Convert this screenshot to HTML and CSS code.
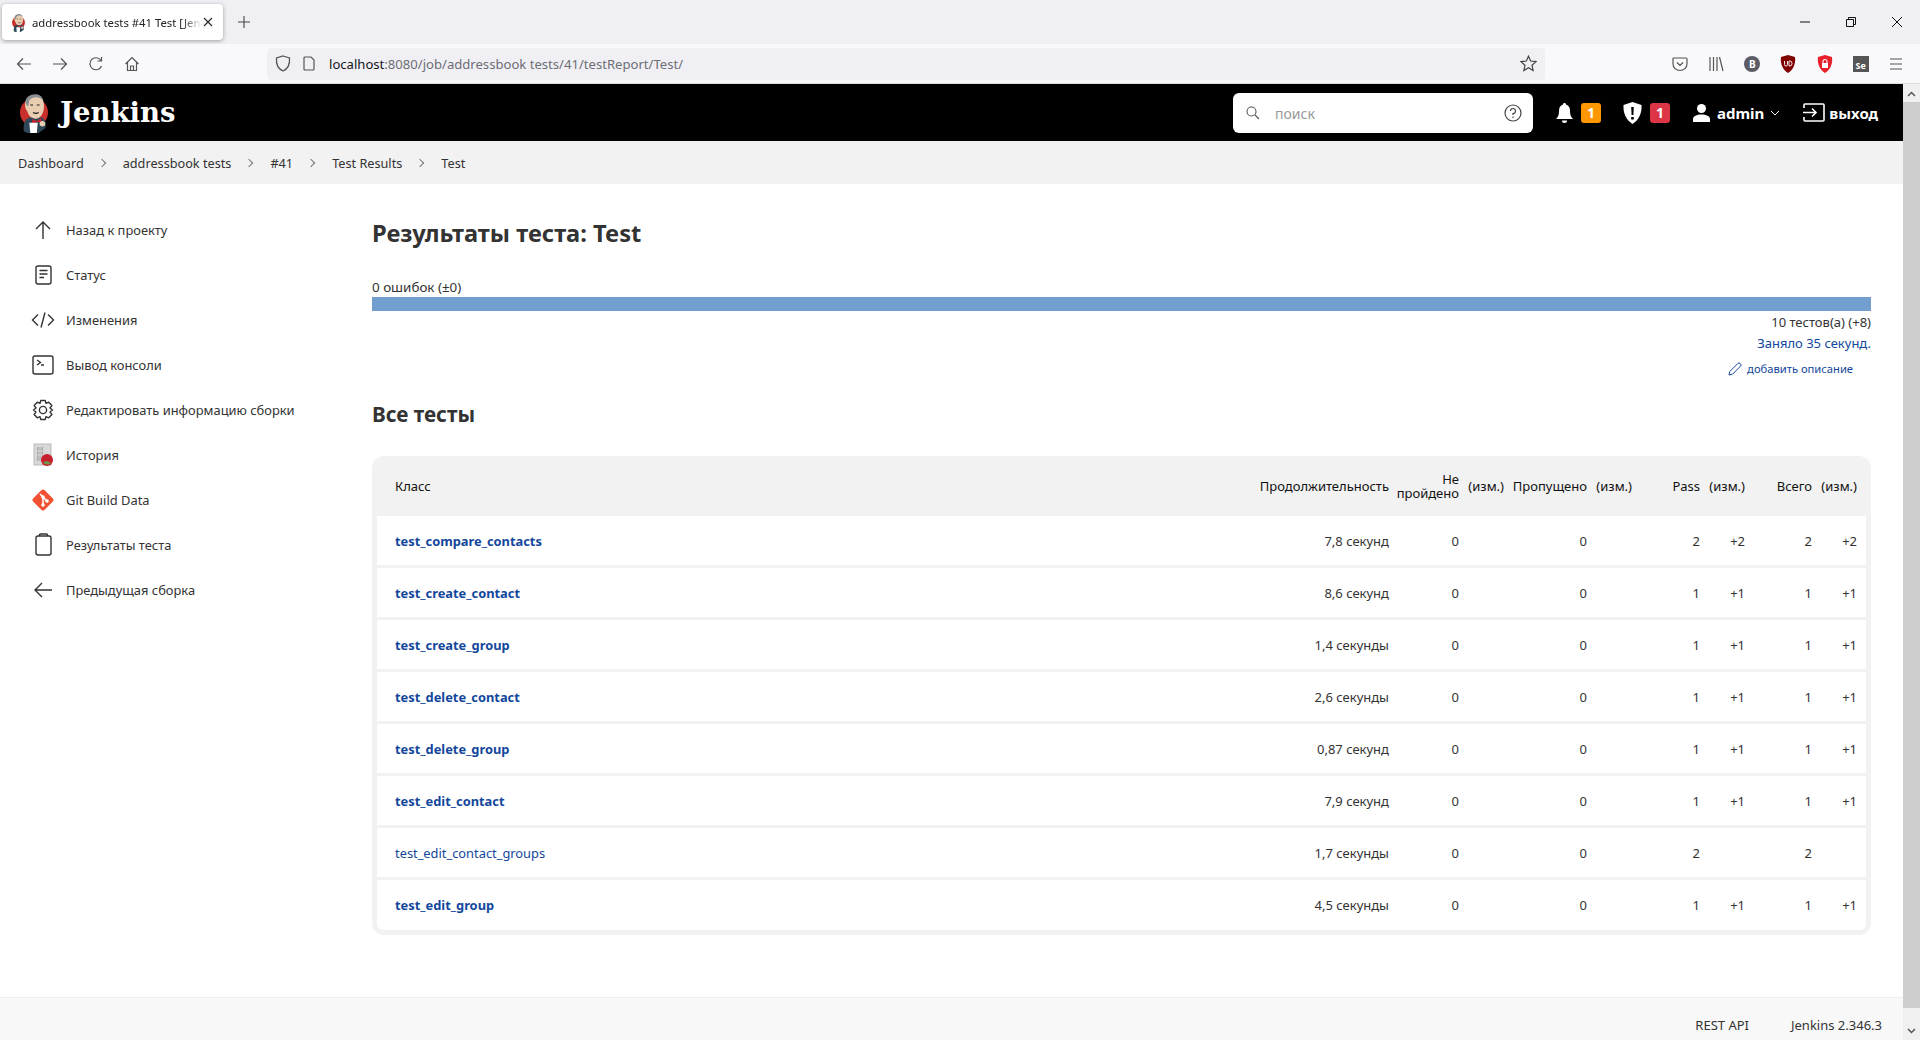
FILE: index.html
```html
<!DOCTYPE html>
<html lang="ru">
<head>
  <meta charset="UTF-8">
  <title>addressbook tests #41 Test [Jenkins]</title>
  <link rel="stylesheet" href="styles.css">
</head>
<body>

<svg class="defs" width="0" height="0">
  <symbol id="butler" viewBox="0 0 34 44">
    <circle cx="17" cy="22" r="15" fill="#c8302c"/>
    <path d="M6 42 C5 33 8 28 13 27 L25 27 C29 29 31 34 29 39 L22 44 H10 Z" fill="#2f4858"/>
    <path d="M8 10 C9 2 25 1 27 10 C29 17 27 25 22 28 C17 30 11 27 10 21 C7 18 7 13 8 10 Z" fill="#e8cdb0"/>
    <path d="M8 11 C8 1 25 -1 27 9 C22 4 15 5 12 9 L11 15 C9 15 8 13 8 11 Z" fill="#8a8f94"/>
    <path d="M13 14 h3 M20 14 h3 M16 22 q3 2 6 0" stroke="#231f20" stroke-width="1.2" fill="none"/>
    <path d="M15 29 L20 31 L25 28 L25 33 L20 32 L15 35 Z" fill="#c8202c"/>
    <path d="M12 33 h9 l-1 11 h-7 Z" fill="#fff"/>
    <circle cx="26" cy="34" r="3" fill="#e8cdb0"/>
  </symbol>
</svg>

<div class="tabstrip">
  <div class="tab">
    <svg class="tab-icon" width="15" height="19"><use href="#butler"/></svg>
    <span class="tab-title">addressbook tests #41 Test [Jenkins]</span>
    <svg class="tab-close" width="10" height="10" viewBox="0 0 10 10"><path d="M1 1 L9 9 M9 1 L1 9" stroke="#222" stroke-width="1.1"/></svg>
  </div>
  <svg class="tab-plus" width="12" height="12" viewBox="0 0 12 12"><path d="M6 0 V12 M0 6 H12" stroke="#444" stroke-width="1.1"/></svg>
  <div class="window-btns">
    <svg width="12" height="12" viewBox="0 0 12 12"><path d="M1 6 H11" stroke="#111"/></svg>
    <svg width="12" height="12" viewBox="0 0 12 12" fill="none" stroke="#111"><path d="M1.5 3.5 H8.5 V10.5 H1.5 Z M3.5 3.5 V1.5 H10.5 V8.5 H8.5"/></svg>
    <svg width="12" height="12" viewBox="0 0 12 12"><path d="M1 1 L11 11 M11 1 L1 11" stroke="#111"/></svg>
  </div>
</div>

<div class="toolbar">
  <div class="nav-btns">
    <svg width="16" height="16" viewBox="0 0 16 16" fill="none" stroke="#555" stroke-width="1.2"><path d="M15 8 H1.5 M7 2.5 L1.5 8 L7 13.5"/></svg>
    <svg width="16" height="16" viewBox="0 0 16 16" fill="none" stroke="#555" stroke-width="1.2"><path d="M1 8 H14.5 M9 2.5 L14.5 8 L9 13.5"/></svg>
    <svg width="16" height="16" viewBox="0 0 16 16" fill="none" stroke="#555" stroke-width="1.2"><path d="M13.5 10 A6 6 0 1 1 13 4.5 M13.5 1 V5 H9.5"/></svg>
    <svg width="16" height="16" viewBox="0 0 16 16" fill="none" stroke="#555" stroke-width="1.2"><path d="M1.5 8 L8 1.5 L14.5 8 M3.5 6.5 V14.5 H12.5 V6.5 M6.5 14.5 V10 H9.5 V14.5"/></svg>
  </div>
  <div class="urlbar">
    <svg width="16" height="17" viewBox="0 0 16 17" fill="none" stroke="#555" stroke-width="1.3"><path d="M8 1 L14.5 3 C15 9 12.5 14 8 16 C3.5 14 1 9 1.5 3 Z"/></svg>
    <svg class="url-page" width="12" height="15" viewBox="0 0 12 15" fill="none" stroke="#555" stroke-width="1.2"><path d="M1 2 Q1 1 2 1 H8 L11 4 V13 Q11 14 10 14 H2 Q1 14 1 13 Z"/></svg>
    <span class="url-text"><span class="url-host">localhost</span>:8080/job/addressbook tests/41/testReport/Test/</span>
    <svg class="url-star" width="17" height="17" viewBox="0 0 17 17" fill="none" stroke="#444" stroke-width="1.2"><path d="M8.5 1.2 L10.7 6 L16 6.6 L12 10.2 L13.1 15.5 L8.5 12.8 L3.9 15.5 L5 10.2 L1 6.6 L6.3 6 Z"/></svg>
  </div>
  <div class="addons">
    <svg width="16" height="16" viewBox="0 0 16 16" fill="none" stroke="#555" stroke-width="1.2"><path d="M2 2 H14 Q15 2 15 3 V8 A7 6.5 0 0 1 1 8 V3 Q1 2 2 2 Z M5 6.5 L8 9.5 L11 6.5"/></svg>
    <svg width="16" height="16" viewBox="0 0 16 16" fill="none" stroke="#555" stroke-width="1.2"><path d="M2 1 V15 M5.5 1 V15 M9 1 V15 M11.5 1 L15 15"/></svg>
    <span class="addon-b">B</span>
    <svg width="16" height="18" viewBox="0 0 16 18"><path d="M8 0 L15 2 C16 9 13 15 8 18 C3 15 0 9 1 2 Z" fill="#800000"/><path d="M4.5 6 V9.5 Q4.5 11 6 11 Q7.5 11 7.5 9.5 V6 M9 6 V11 H10 Q12 11 12 8.5 Q12 6 10 6 Z" fill="none" stroke="#fff" stroke-width=".9"/></svg>
    <svg width="16" height="18" viewBox="0 0 16 18"><path d="M8 0 L15 2 C16 9 13 15 8 18 C3 15 0 9 1 2 Z" fill="#e8202a"/><path d="M5 8 H11 V13 H5 Z" fill="#fff"/><path d="M6 8 V6.5 A2 2 0 0 1 10 6.5 V8" fill="none" stroke="#fff" stroke-width="1.1"/></svg>
    <span class="addon-se">Se</span>
    <svg width="14" height="12" viewBox="0 0 14 12"><path d="M1 1 H13 M1 6 H13 M1 11 H13" stroke="#555" stroke-width="1.2"/></svg>
  </div>
</div>

<div class="viewport">
  <div class="page">
    <header class="top">
      <svg class="logo" width="32" height="41"><use href="#butler"/></svg>
      <span class="brand">Jenkins</span>
      <div class="search">
        <svg width="14" height="14" viewBox="0 0 14 14" fill="none" stroke="#555" stroke-width="1.1"><circle cx="5.5" cy="5.5" r="4.5"/><path d="M9 9 L13 13"/></svg>
        <span class="search-text">поиск</span>
        <svg class="search-help" width="18" height="18" viewBox="0 0 18 18" fill="none" stroke="#444" stroke-width="1.2"><circle cx="9" cy="9" r="8"/><path d="M6.5 7 A2.5 2.5 0 1 1 9 9.5 V11 M9 12.5 V14"/></svg>
      </div>
      <svg class="top-bell" width="17" height="20" viewBox="0 0 17 20" fill="#fff"><path d="M8.5 0 A1.5 1.5 0 0 1 10 1.6 C13 2.4 14 5 14 8 C14 12 15 14 17 16 H0 C2 14 3 12 3 8 C3 5 4 2.4 7 1.6 A1.5 1.5 0 0 1 8.5 0 Z M6 17.5 H11 A2.5 2.5 0 0 1 6 17.5 Z"/></svg>
      <span class="badge badge-orange">1</span>
      <svg class="top-shield" width="19" height="22" viewBox="0 0 19 22"><path d="M9.5 0 L18.5 3 C19 11 16 18 9.5 22 C3 18 0 11 .5 3 Z" fill="#fff"/><path d="M8.2 5 H10.8 L10.4 13 H8.6 Z M8.2 15 H10.8 V17.4 H8.2 Z" fill="#000"/></svg>
      <span class="badge badge-red">1</span>
      <svg class="top-user" width="17" height="18" viewBox="0 0 17 18" fill="#fff"><circle cx="8.5" cy="4.5" r="4.5"/><path d="M0 18 V15 C0 12 4 10.5 8.5 10.5 C13 10.5 17 12 17 15 V18 Z"/></svg>
      <span class="top-name">admin</span>
      <svg class="top-chevron" width="10" height="6" viewBox="0 0 10 6" fill="none" stroke="#fff"><path d="M1 1 L5 5 L9 1"/></svg>
      <svg class="top-exit" width="22" height="19" viewBox="0 0 22 19" fill="none" stroke="#fff" stroke-width="1.6"><path d="M1 5 V2 Q1 1 2 1 H20 Q21 1 21 2 V17 Q21 18 20 18 H2 Q1 18 1 17 V14 M0 9.5 H13 M9 5.5 L13 9.5 L9 13.5"/></svg>
      <span class="top-logout">выход</span>
    </header>

    <nav class="crumbs">
      <a>Dashboard</a><span class="sep"></span>
      <a>addressbook tests</a><span class="sep"></span>
      <a>#41</a><span class="sep"></span>
      <a>Test Results</a><span class="sep"></span>
      <a>Test</a>
    </nav>

    <div class="main">
      <aside class="side">
        <a class="side-item">
          <svg width="24" height="24" viewBox="0 0 24 24" fill="none" stroke="#333" stroke-width="1.4"><path d="M12 21 V4 M5 11 L12 4 L19 11"/></svg>
          Назад к проекту
        </a>
        <a class="side-item">
          <svg width="24" height="24" viewBox="0 0 24 24" fill="none" stroke="#333" stroke-width="1.4"><rect x="5" y="3" width="15" height="18" rx="2"/><path d="M8.5 7.5 H16.5 M8.5 11 H16.5 M8.5 14.5 H13"/></svg>
          Статус
        </a>
        <a class="side-item">
          <svg width="24" height="24" viewBox="0 0 24 24" fill="none" stroke="#333" stroke-width="1.4"><path d="M7 6.5 L1.5 12 L7 17.5 M17 6.5 L22.5 12 L17 17.5 M14 4.5 L10 19.5"/></svg>
          Изменения
        </a>
        <a class="side-item">
          <svg width="24" height="24" viewBox="0 0 24 24" fill="none" stroke="#333" stroke-width="1.4"><rect x="2" y="3" width="20" height="18" rx="2"/><path d="M6 7 L9.5 9.5 L6 12 M10 12 H13"/></svg>
          Вывод консоли
        </a>
        <a class="side-item">
          <svg width="24" height="24" viewBox="0 0 24 24" fill="none" stroke="#333" stroke-width="1.4"><circle cx="12" cy="12" r="3.6"/><path d="M9.8 2.5 H14.2 L15 5.4 L17.7 4.2 L20.9 7.6 L19 10 L21.5 12 L19 14 L20.9 16.4 L17.7 19.8 L15 18.6 L14.2 21.5 H9.8 L9 18.6 L6.3 19.8 L3.1 16.4 L5 14 L2.5 12 L5 10 L3.1 7.6 L6.3 4.2 L9 5.4 Z" stroke-linejoin="round"/></svg>
          Редактировать информацию сборки
        </a>
        <a class="side-item">
          <svg width="24" height="24" viewBox="0 0 24 24"><rect x="3" y="1" width="17" height="21" fill="#d8d8d8" stroke="#bbb"/><path d="M6 4 H12 V18 H6 Z" fill="#aaa"/><path d="M8 4 V18 M10 4 V18 M6 8 H12 M6 12 H12" stroke="#e6e6e6" stroke-width=".7"/><circle cx="16" cy="17" r="6" fill="#c8202c"/><path d="M12 19 A5 5 0 0 0 20 20 L16 18 Z" fill="#6a9a4a"/></svg>
          История
        </a>
        <a class="side-item">
          <svg width="24" height="24" viewBox="0 0 24 24"><rect x="4" y="4" width="16" height="16" rx="2" transform="rotate(45 12 12)" fill="#f05133"/><path d="M9 6 L17 14 M12 9 V17" stroke="#fff" stroke-width="1.6"/><circle cx="12" cy="9" r="1.8" fill="#fff"/><circle cx="12" cy="17" r="1.8" fill="#fff"/><circle cx="16" cy="13" r="1.8" fill="#fff"/></svg>
          Git Build Data
        </a>
        <a class="side-item">
          <svg width="24" height="24" viewBox="0 0 24 24" fill="none" stroke="#333" stroke-width="1.4"><rect x="5" y="3" width="15" height="19" rx="2"/><path d="M8.5 3 V2 Q8.5 1 9.5 1 H15.5 Q16.5 1 16.5 2 V3"/></svg>
          Результаты теста
        </a>
        <a class="side-item">
          <svg width="24" height="24" viewBox="0 0 24 24" fill="none" stroke="#333" stroke-width="1.4"><path d="M21 12 H4 M11 5 L4 12 L11 19"/></svg>
          Предыдущая сборка
        </a>
      </aside>

      <section class="content">
        <h1>Результаты теста: Test</h1>
        <div class="fail-count">0 ошибок (±0)</div>
        <div class="bar"></div>
        <div class="total">10 тестов(а) (+8)</div>
        <div class="took">Заняло 35 секунд.</div>
        <div class="add-desc">
          <svg width="14" height="14" viewBox="0 0 14 14" fill="none" stroke="#12479c"><path d="M1 13 L1.8 9.5 L10 1.3 Q11 .5 12 1.3 L12.7 2 Q13.5 3 12.7 4 L4.5 12.2 Z"/></svg>
          <a>добавить описание</a>
        </div>
        <h2>Все тесты</h2>

        <div class="table-box">
          <table class="tests">
            <colgroup>
              <col class="c-class"><col class="c-dur"><col class="c-fail"><col class="c-diff">
              <col class="c-skip"><col class="c-diff"><col class="c-pass"><col class="c-diff">
              <col class="c-all"><col class="c-last">
            </colgroup>
            <thead>
              <tr>
                <th>Класс</th><th>Продолжительность</th><th>Не<br>пройдено</th><th>(изм.)</th>
                <th>Пропущено</th><th>(изм.)</th><th>Pass</th><th>(изм.)</th><th>Всего</th><th>(изм.)</th>
              </tr>
            </thead>
            <tbody>
              <tr><td><a class="changed">test_compare_contacts</a></td><td>7,8 секунд</td><td>0</td><td></td><td>0</td><td></td><td>2</td><td>+2</td><td>2</td><td>+2</td></tr>
              <tr><td><a class="changed">test_create_contact</a></td><td>8,6 секунд</td><td>0</td><td></td><td>0</td><td></td><td>1</td><td>+1</td><td>1</td><td>+1</td></tr>
              <tr><td><a class="changed">test_create_group</a></td><td>1,4 секунды</td><td>0</td><td></td><td>0</td><td></td><td>1</td><td>+1</td><td>1</td><td>+1</td></tr>
              <tr><td><a class="changed">test_delete_contact</a></td><td>2,6 секунды</td><td>0</td><td></td><td>0</td><td></td><td>1</td><td>+1</td><td>1</td><td>+1</td></tr>
              <tr><td><a class="changed">test_delete_group</a></td><td>0,87 секунд</td><td>0</td><td></td><td>0</td><td></td><td>1</td><td>+1</td><td>1</td><td>+1</td></tr>
              <tr><td><a class="changed">test_edit_contact</a></td><td>7,9 секунд</td><td>0</td><td></td><td>0</td><td></td><td>1</td><td>+1</td><td>1</td><td>+1</td></tr>
              <tr><td><a>test_edit_contact_groups</a></td><td>1,7 секунды</td><td>0</td><td></td><td>0</td><td></td><td>2</td><td></td><td>2</td><td></td></tr>
              <tr><td><a class="changed">test_edit_group</a></td><td>4,5 секунды</td><td>0</td><td></td><td>0</td><td></td><td>1</td><td>+1</td><td>1</td><td>+1</td></tr>
            </tbody>
          </table>
        </div>
      </section>
    </div>

    <footer class="foot">
      <a>REST API</a>
      <a>Jenkins 2.346.3</a>
    </footer>
  </div>

  <div class="scrollbar">
    <svg width="9" height="6" viewBox="0 0 9 6" fill="none" stroke="#555" stroke-width="1.5"><path d="M1 5 L4.5 1.5 L8 5"/></svg>
    <div class="thumb"></div>
    <svg width="9" height="6" viewBox="0 0 9 6" fill="none" stroke="#555" stroke-width="1.5"><path d="M1 1 L4.5 4.5 L8 1"/></svg>
  </div>
</div>

</body>
</html>
```

FILE: styles.css
```css
* {
  box-sizing: border-box;
}
html, body {
  margin: 0;
  padding: 0;
  height: 1040px;
  overflow: hidden;
}
body {
  display: flex;
  flex-direction: column;
  font-family: "Noto Sans", "Open Sans", sans-serif;
  font-size: 13px;
  color: #333;
  background-color: #fff;
}
.defs {
  position: absolute;
}

/* browser chrome */
.tabstrip {
  display: flex;
  align-items: center;
  height: 44px;
  flex: none;
  background-color: #f0f0f4;
}
.tab {
  display: flex;
  align-items: center;
  width: 221px;
  height: 36px;
  margin-left: 2px;
  padding-left: 9px;
  background-color: #fff;
  border-radius: 4px;
  box-shadow: 0 1px 4px rgba(0,0,0,0.35);
}
.tab-icon {
  flex: none;
}
.tab-title {
  width: 170px;
  margin-left: 6px;
  font-size: 11.3px;
  color: #222;
  white-space: nowrap;
  overflow: hidden;
  -webkit-mask-image: linear-gradient(to right, #000 150px, transparent 170px);
  mask-image: linear-gradient(to right, #000 150px, transparent 170px);
}
.tab-close {
  margin-left: 1px;
}
.tab-plus {
  margin-left: 15px;
}
.window-btns {
  display: flex;
  gap: 34px;
  margin-left: auto;
  padding-right: 17px;
}
.toolbar {
  display: flex;
  align-items: center;
  height: 40px;
  flex: none;
  background-color: #f9f9fb;
  border-bottom: 1px solid #ddd;
}
.nav-btns {
  display: flex;
  gap: 20px;
  width: 267px;
  padding-left: 16px;
}
.urlbar {
  display: flex;
  align-items: center;
  width: 1278px;
  height: 32px;
  padding: 0 8px;
  background-color: #f0f0f4;
  border-radius: 4px;
}
.url-page {
  margin-left: 12px;
}
.url-text {
  margin-left: 14px;
  font-size: 13.1px;
  color: #6d6d75;
  white-space: nowrap;
}
.url-host {
  color: #15141a;
}
.url-star {
  margin-left: auto;
}
.addons {
  display: flex;
  align-items: center;
  justify-content: space-between;
  flex: 1;
  padding: 0 17px 0 127px;
}
.addon-b {
  width: 16px;
  height: 16px;
  font-size: 10px;
  font-weight: bold;
  line-height: 16px;
  text-align: center;
  color: #fff;
  background-color: #5b5b66;
  border-radius: 50%;
}
.addon-se {
  width: 16px;
  height: 16px;
  padding-top: 4px;
  font-size: 9px;
  font-weight: bold;
  line-height: 12px;
  text-align: center;
  color: #fff;
  background-color: #555;
}

/* page */
.viewport {
  display: flex;
  flex: 1;
  min-height: 0;
}
.page {
  display: flex;
  flex-direction: column;
  flex: 1;
  min-width: 0;
}
.scrollbar {
  display: flex;
  flex-direction: column;
  align-items: center;
  width: 17px;
  padding-top: 7px;
  padding-bottom: 6px;
  background-color: #f0f0f0;
}
.thumb {
  width: 17px;
  flex: 1;
  margin: 5px 0 20px;
  background-color: #cdcdcd;
}
.top {
  display: flex;
  align-items: center;
  height: 57px;
  flex: none;
  padding-left: 18px;
  color: #fff;
  background-color: #000;
}
.logo {
  flex: none;
}
.brand {
  width: 1173px;
  margin-left: 10px;
  padding-bottom: 2px;
  font-family: "DejaVu Serif", "Liberation Serif", serif;
  font-size: 27.5px;
  font-weight: bold;
}
.search {
  display: flex;
  align-items: center;
  width: 300px;
  height: 40px;
  padding: 0 11px 0 13px;
  background-color: #fff;
  border-radius: 6px;
}
.search-text {
  margin-left: 15px;
  padding-top: 2px;
  font-size: 14px;
  color: #999;
}
.search-help {
  margin-left: auto;
}
.top-bell {
  margin-left: 23px;
}
.badge {
  width: 20px;
  height: 20px;
  margin-left: 8px;
  font-size: 14px;
  font-weight: bold;
  line-height: 20px;
  text-align: center;
  color: #fff;
  border-radius: 3px;
}
.badge-orange {
  background-color: #ff9800;
}
.badge-red {
  background-color: #dc3545;
}
.top-shield {
  margin-left: 22px;
}
.top-user {
  margin-left: 23px;
}
.top-name {
  margin-left: 7px;
  font-size: 15px;
  font-weight: bold;
}
.top-chevron {
  margin-left: 6px;
}
.top-exit {
  margin-left: 23px;
}
.top-logout {
  margin-left: 4px;
  font-size: 15px;
  font-weight: bold;
}
.crumbs {
  display: flex;
  align-items: center;
  height: 43px;
  flex: none;
  padding-left: 18px;
  font-size: 12.7px;
  background-color: #f2f2f2;
}
.sep {
  width: 6px;
  height: 6px;
  margin: 0 18px 0 15px;
  border-top: 1px solid #777;
  border-right: 1px solid #777;
  transform: rotate(45deg);
}
.main {
  display: flex;
  flex: 1;
  min-height: 0;
}
.side {
  width: 372px;
  flex: none;
  padding: 23px 0 0 31px;
  font-size: 12.9px;
}
.side-item {
  display: flex;
  align-items: center;
  gap: 11px;
  height: 45px;
}
.side-item svg {
  flex: none;
}
.content {
  flex: 1;
  min-width: 0;
  padding: 33px 32px 0 0;
}
h1 {
  margin: 0;
  font-size: 23.7px;
  font-weight: bold;
  line-height: 32px;
}
.fail-count {
  margin-top: 29px;
  font-size: 13.4px;
  line-height: 18px;
}
.bar {
  height: 14px;
  margin-top: 1px;
  background-color: #729fcf;
}
.total {
  margin-top: 2px;
  line-height: 18px;
  text-align: right;
}
.took {
  margin-top: 3px;
  line-height: 18px;
  text-align: right;
  color: #12479c;
}
.add-desc {
  display: flex;
  align-items: center;
  justify-content: flex-end;
  gap: 5px;
  margin-top: 8px;
  padding-right: 18px;
  font-size: 11.2px;
  line-height: 18px;
  color: #12479c;
}
h2 {
  margin: 22px 0 0;
  font-size: 20.7px;
  font-weight: bold;
  line-height: 28px;
}
.table-box {
  margin-top: 28px;
  padding: 0 5px 5px;
  background-color: #f2f2f2;
  border-radius: 12px;
}
.tests {
  width: 1489px;
  table-layout: fixed;
  border-collapse: separate;
  border-spacing: 0;
  font-size: 13px;
}
.c-class { width: 860px; }
.c-dur { width: 157px; }
.c-fail { width: 70px; }
.c-diff { width: 45px; }
.c-skip { width: 83px; }
.c-pass { width: 68px; }
.c-all { width: 67px; }
.c-last { width: 49px; }
.tests th {
  height: 60px;
  padding: 0 5px 0 0;
  font-weight: normal;
  line-height: 14px;
  text-align: right;
  color: #111;
}
.tests td {
  height: 52px;
  padding: 0 5px;
  text-align: right;
  background-color: #fff;
  border-bottom: 3px solid #f2f2f2;
}
.tests th:first-child, .tests td:first-child {
  padding-left: 18px;
  text-align: left;
}
.tests th:last-child, .tests td:last-child {
  padding-right: 9px;
}
.tests tbody tr:last-child td {
  height: 50px;
  border-bottom: none;
}
.tests tbody tr:last-child td:first-child {
  border-bottom-left-radius: 6px;
}
.tests tbody tr:last-child td:last-child {
  border-bottom-right-radius: 6px;
}
.tests a {
  font-size: 12.85px;
  color: #12479c;
}
.tests a.changed {
  font-weight: bold;
}
.foot {
  display: flex;
  justify-content: flex-end;
  align-items: center;
  gap: 42px;
  height: 43px;
  flex: none;
  padding: 12px 21px 0 0;
  background-color: #f8f8f8;
  border-top: 1px solid #eee;
}
```
